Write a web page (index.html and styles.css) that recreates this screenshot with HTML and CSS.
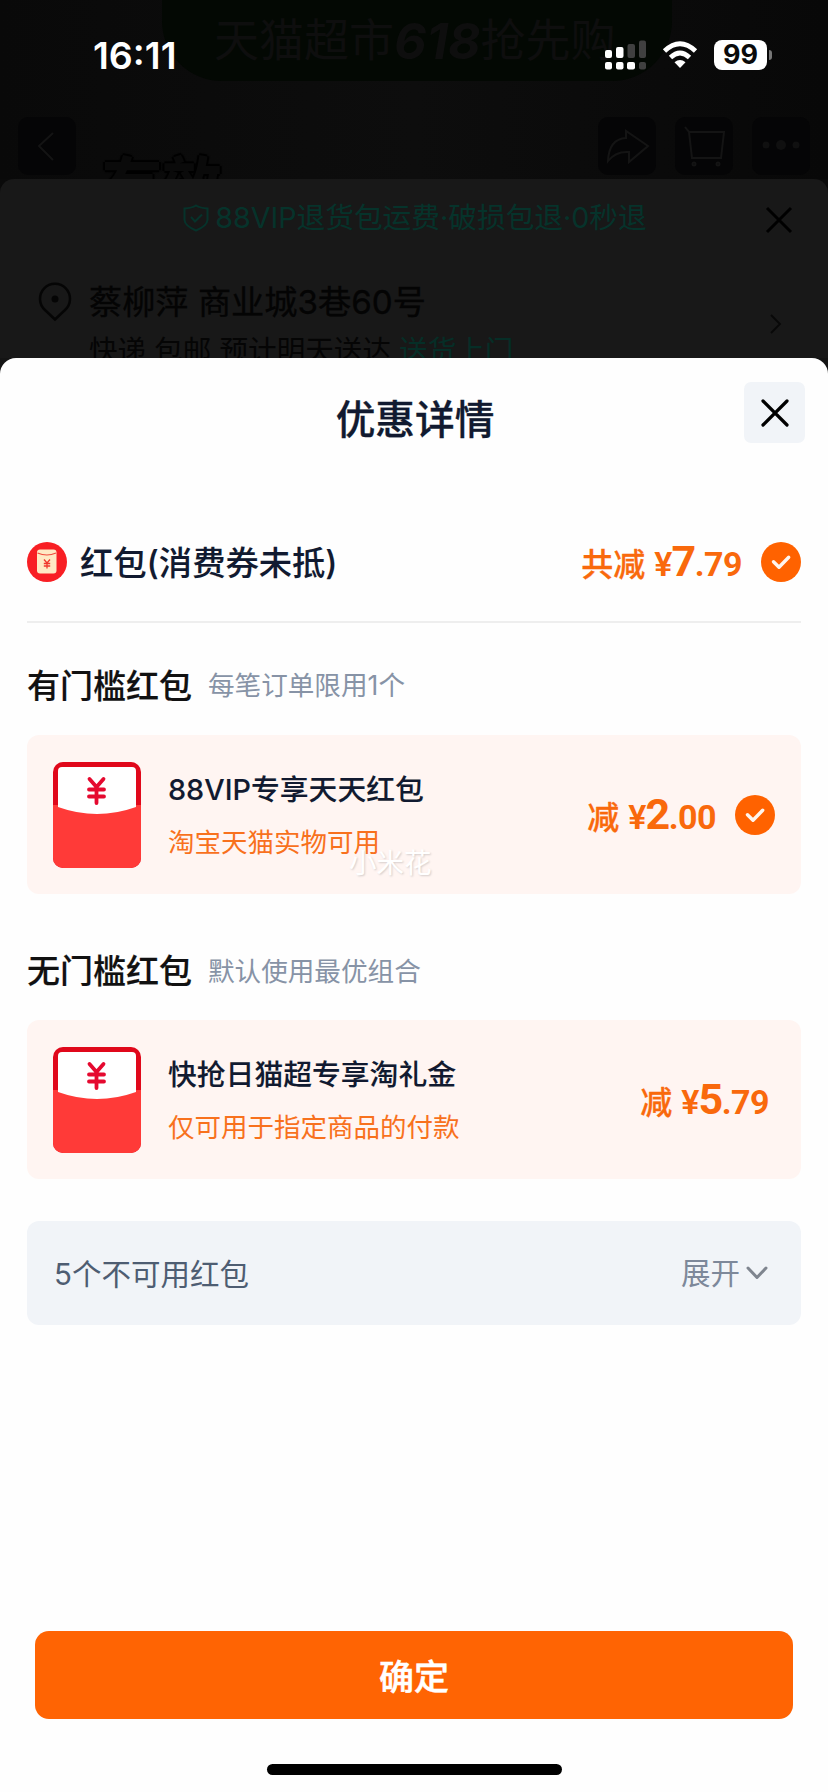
FILE: index.html
```html
<!DOCTYPE html>
<html lang="zh-CN">
<head>
<meta charset="utf-8">
<title>优惠详情</title>
<link rel="stylesheet" href="styles.css">
</head>
<body>
<svg width="0" height="0" class="defs" aria-hidden="true">
  <symbol id="check" viewBox="0 0 40 40">
    <circle cx="20" cy="20" r="20" fill="#ff6200"/>
    <path d="M12.5 19.8 L18 25.3 L27.7 15.3" fill="none" stroke="#fff5ee" stroke-width="3.4" stroke-linecap="round" stroke-linejoin="round"/>
  </symbol>
  <symbol id="envelope" viewBox="0 0 88 106">
    <rect width="88" height="106" rx="10" fill="#e0081b"/>
    <path d="M0 43 H88 V96 a10 10 0 0 1 -10 10 H10 a10 10 0 0 1 -10 -10 Z" fill="#ff3a38"/>
    <path d="M5 9 a4 4 0 0 1 4 -4 H79 a4 4 0 0 1 4 4 V45 Q44 59 5 45 Z" fill="#fff"/>
    <path d="M36.5 17 L43.5 25 L50.5 17 M36 27.5 H51 M36 34.5 H51 M43.5 26 V41" fill="none" stroke="#e5092f" stroke-width="3.8" stroke-linecap="round" stroke-linejoin="round"/>
  </symbol>
</svg>

<div class="phone">
  <section class="page">
    <div class="hero">
      <div class="banner"><span>天猫超市</span><b>618</b><span>抢先购</span></div>
      <nav class="nav">
        <span class="nav-btn"><svg width="58" height="58" viewBox="0 0 58 58"><path d="M35 16 L21 29 L35 43"/></svg></span>
        <span class="promo">有效</span>
        <span class="nav-btn"><svg width="58" height="58" viewBox="0 0 58 58"><path d="M10 44 Q11 22 28 21 V14 L50 29 L31 45 V35 Q18 34 10 44 Z"/></svg></span>
        <span class="nav-btn"><svg width="58" height="58" viewBox="0 0 58 58"><path d="M10 10 L14 15 L17 41 H46 L49 15 H14"/><circle cx="19" cy="47" r="1.5"/><circle cx="43" cy="47" r="1.5"/></svg></span>
        <span class="nav-btn"><svg width="58" height="58" viewBox="0 0 58 58" class="dots"><circle cx="14" cy="28" r="3.5"/><circle cx="29" cy="28" r="5"/><circle cx="44" cy="28" r="3.5"/></svg></span>
      </nav>
    </div>
    <div class="order">
      <div class="promise">
        <svg width="26" height="28" viewBox="0 0 26 28"><path d="M13 1.5 Q17 4 24.5 4.500 V16 Q24 22 13 26.500 Q2 22 1.500 16 V4.500 Q9 4 13 1.500 Z M8 13 L12 17.500 L19 10.500"/></svg>
        <span>88VIP退货包运费·破损包退·0秒退</span>
      </div>
      <svg class="order-close" width="28" height="28" viewBox="0 0 28 28"><path d="M2 2 L26 26 M26 2 L2 26"/></svg>
      <div class="address">
        <svg class="pin" width="34" height="40" viewBox="0 0 34 40"><path d="M17 37.500 L7 28 A15 15 0 1 1 27 28 Z"/><circle cx="17" cy="17" r="3.500"/></svg>
        <div class="address-text">
          <div class="addr-name">蔡柳萍 商业城3巷60号</div>
          <div class="addr-ship">快递 包邮 预计明天送达 <em>送货上门</em></div>
        </div>
        <svg class="arrow" width="14" height="22" viewBox="0 0 14 22"><path d="M2 2 L11 11 L2 20"/></svg>
      </div>
    </div>
    <header class="status">
      <span class="time">16:11</span>
      <svg class="signal" width="42" height="30" viewBox="0 0 42 30">
        <g fill="#fff"><rect x="0" y="10" width="7" height="8" rx="2"/><rect x="11" y="7" width="7.500" height="11" rx="2"/><rect x="0" y="22" width="7" height="7.500" rx="2"/><rect x="11" y="22" width="7.500" height="7.500" rx="2"/><rect x="22" y="22" width="8" height="7.500" rx="2"/></g>
        <g fill="#404040"><rect x="22.500" y="4" width="7.500" height="14" rx="2"/><rect x="34" y="0.500" width="7" height="17.500" rx="2"/><rect x="34" y="22" width="7" height="7.500" rx="2"/></g>
      </svg>
      <svg class="wifi" width="36" height="28" viewBox="0 0 36 28"><path d="M2.500 10 Q18 -4.500 33.500 10" /><path d="M8.500 16.500 Q18 7.500 27.500 16.500"/><path class="wedge" d="M18 27 L12.500 21.300 Q18 16.500 23.500 21.300 Z"/></svg>
      <span class="battery">99</span><i class="cap"></i>
    </header>
  </section>

  <main class="sheet">
    <div class="sheet-head">
      <h1>优惠详情</h1>
      <span class="close"><svg width="28" height="28" viewBox="0 0 28 28"><path d="M2 2 L26 26 M26 2 L2 26"/></svg></span>
    </div>

    <div class="summary">
      <svg class="coin" width="40" height="40" viewBox="0 0 40 40">
        <circle cx="20" cy="20" r="20" fill="#f81f24"/>
        <rect x="10" y="7.500" width="19.500" height="24" rx="3" fill="#ffe9c4"/>
        <path d="M10.500 11 Q20 15 29 11" fill="none" stroke="#f04a3c" stroke-width="1.200"/>
        <path d="M17 17.500 L20 21 L23 17.500 M16.800 21.500 H23.200 M16.800 24 H23.200 M20 21 V26.500" fill="none" stroke="#f0362c" stroke-width="1.300"/>
      </svg>
      <span class="summary-name">红包(消费券未抵)</span>
      <span class="price"><span class="cut">共减</span><span class="yen">¥</span><b>7</b><span class="cents">.79</span></span>
      <svg class="check" width="40" height="40"><use href="#check"/></svg>
    </div>

    <h2 class="group first"><span>有门槛红包</span><small>每笔订单限用1个</small></h2>
    <article class="card">
      <svg class="env" width="88" height="106"><use href="#envelope"/></svg>
      <div class="info"><h3>88VIP专享天天红包</h3><p>淘宝天猫实物可用</p></div>
      <span class="price"><span class="cut">减</span><span class="yen">¥</span><b>2</b><span class="cents">.00</span></span>
      <svg class="check" width="40" height="40"><use href="#check"/></svg>
      <span class="mark">小米花</span>
    </article>

    <h2 class="group"><span>无门槛红包</span><small>默认使用最优组合</small></h2>
    <article class="card alone">
      <svg class="env" width="88" height="106"><use href="#envelope"/></svg>
      <div class="info"><h3>快抢日猫超专享淘礼金</h3><p>仅可用于指定商品的付款</p></div>
      <span class="price"><span class="cut">减</span><span class="yen">¥</span><b>5</b><span class="cents">.79</span></span>
    </article>

    <div class="unusable">
      <span>5个不可用红包</span>
      <span class="expand"><span>展开</span><svg width="22" height="14" viewBox="0 0 22 14"><path d="M2 2 L11 11.500 L20 2"/></svg></span>
    </div>

    <button class="confirm">确定</button>
    <div class="home"></div>
  </main>
</div>
</body>
</html>
```
FILE: styles.css
```css
* { box-sizing: border-box; }
body {
  margin: 0;
  font-family: Inter, "Noto Sans CJK SC", sans-serif;
  background: #141414;
}
svg { display: block; flex: none; }
.defs { position: absolute; }
h1, h2, h3, p { margin: 0; font-weight: 500; }
.phone {
  display: flex;
  flex-direction: column;
  width: 828px;
  height: 1792px;
  overflow: hidden;
}

/* dimmed page behind the sheet */
.page { position: relative; height: 358px; overflow: hidden; flex: none; white-space: nowrap; background: #0a0a0a; }
.hero { height: 179px; overflow: hidden; background: linear-gradient(90deg, #090909, #0d0d0d 50%, #080808); }
.banner {
  display: flex;
  align-items: center;
  width: 510px;
  height: 81px;
  margin-left: 162px;
  padding-left: 52px;
  border-radius: 0 0 60px 60px;
  background: #030803;
  color: #0e0e0e;
  font-size: 45px;
  line-height: 76px;
}
.banner b { font-size: 50px; font-style: italic; font-weight: 700; }
.nav { display: flex; align-items: flex-start; gap: 19px; padding: 36px 18px 0; }
.nav-btn { width: 58px; height: 58px; border-radius: 10px; background: #050506; flex: none; }
.nav-btn svg { fill: none; stroke: #141414; stroke-width: 2; }
.nav-btn .dots { fill: #101010; stroke: none; }
.promo {
  flex: 1;
  height: 62px;
  padding: 30px 0 0 7px;
  font-size: 60px;
  line-height: 76px;
  font-weight: 800;
  color: #0a0a0a;
  text-shadow: 2px 0 1px #010101, -2px 0 1px #010101, 0 2px 1px #010101, 0 -2px 1px #010101;
}
.order { position: relative; height: 179px; background: #181818; border-radius: 14px 14px 0 0; }
.promise {
  display: flex;
  justify-content: center;
  gap: 6px;
  padding: 25px 0 0 4px;
  color: #06332b;
  font-size: 28.700px;
  line-height: 28px;
}
.promise svg { fill: none; stroke: #06332b; stroke-width: 2; margin-left: -2px; }
.order-close { position: absolute; right: 35px; top: 27px; stroke: #000; stroke-width: 3; }
.address { display: flex; padding: 49px 45px 0 38px; }
.pin { margin-top: 1px; fill: none; stroke: #050505; stroke-width: 2.500px; }
.pin circle { fill: #050505; stroke: none; }
.address-text { flex: 1; margin-left: 17px; }
.addr-name { font-size: 33.200px; line-height: 42px; color: #040404; -webkit-text-stroke: 0.300px #040404; }
.addr-ship { margin-top: 8px; font-size: 28.600px; line-height: 40px; color: #050505; }
.addr-ship em { font-style: normal; color: #062e27; }
.arrow { margin-top: 32px; fill: none; stroke: #080808; stroke-width: 1.800px; }

.status { position: absolute; inset: 0 0 auto 0; height: 110px; display: flex; align-items: center; color: #fff; }
.time { width: 511px; padding-left: 93px; font-size: 37.500px; font-weight: 600; }
.signal { margin-left: 94px; }
.wifi { margin-left: 15px; fill: none; stroke: #fff; stroke-width: 4.800px; }
.wifi .wedge { fill: #fff; stroke: none; }
.battery {
  width: 53px;
  height: 30px;
  margin-left: 16px;
  border-radius: 8px;
  background: #fff;
  color: #0a0a0a;
  font-size: 27px;
  font-weight: 700;
  line-height: 30px;
  text-align: center;
}
.cap { width: 3px; height: 10px; margin-left: 2px; border-radius: 0 4px 4px 0; background: #777; }

/* discount sheet */
.sheet {
  display: flex;
  flex-direction: column;
  height: 1434px;
  padding: 0 27px;
  border-radius: 16px 16px 0 0;
  background: #fefefe;
  white-space: nowrap;
}
.sheet-head { display: grid; grid-template-columns: 61px 1fr 61px; height: 146px; margin-right: -4px; }
.sheet-head h1 { grid-column: 2; margin-left: -2px; padding-top: 32px; font-size: 39.700px; line-height: 60px; text-align: center; color: #111a30; -webkit-text-stroke: 0.300px #111a30; }
.close { display: grid; place-items: center; width: 61px; height: 61px; margin-top: 24px; border-radius: 7px; background: #f1f4f8; }
.close svg { stroke: #000; stroke-width: 3.200px; stroke-linecap: round; }
.summary { display: flex; align-items: center; height: 119px; padding-bottom: 2px; border-bottom: 2px solid #eee; }
.summary-name { flex: 1; margin: -3px 0 0 13px; font-size: 33.300px; font-weight: 500; color: #111a30; -webkit-text-stroke: 0.100px #111a30; }
.price { display: flex; align-items: baseline; padding-top: 2px; color: #f9690c; font: 700 34px/44px Roboto, "Noto Sans CJK SC", sans-serif; }
.price .cut { margin: 0 9px 0 0; font-size: 32px; font-weight: 500; line-height: 40px; -webkit-text-stroke: 0.300px #f9690c; }
.price .yen { font-size: 34px; font-weight: 600; letter-spacing: -1px; }
.price b { font-size: 43px; font-weight: 700; letter-spacing: -1.500px; }
.price .cents { letter-spacing: -0.500px; }
.check { margin-left: 19px; }
.group { display: flex; align-items: center; height: 126px; padding-top: 24px; }
.group.first { height: 112px; padding-top: 9px; }
.group span { font-size: 33px; color: #111; -webkit-text-stroke: 0.200px #111; }
.group small { margin-left: 16px; font-size: 26.600px; font-weight: 400; color: #8793a6; }
.card {
  position: relative;
  display: flex;
  align-items: center;
  height: 159px;
  padding: 0 26px;
  border-radius: 12px;
  background: #fff5f2;
}
.info { flex: 1; margin-left: 27px; padding-top: 2px; }
.info h3 { font-size: 28.800px; line-height: 42px; color: #111a30; -webkit-text-stroke: 0.100px #111a30; }
.info p { margin-top: 10px; font-size: 26.500px; font-weight: 400; line-height: 42px; color: #f8711d; }
.alone { padding-right: 32px; }
.mark { position: absolute; left: 322px; top: 108px; font-size: 27.500px; line-height: 40px; color: #fff; text-shadow: 1px 1px 2px #d5cdcb; }
.unusable {
  display: flex;
  align-items: center;
  justify-content: space-between;
  height: 104px;
  margin-top: 42px;
  padding: 0 33px 0 27px;
  border-radius: 12px;
  background: #f1f4f8;
  font-size: 29.500px;
  color: #4e5d72;
}
.unusable span { margin-top: -2px; }
.expand { display: flex; align-items: center; gap: 6px; color: #7d889a; }
.expand svg { margin-top: 2px; fill: none; stroke: #7f858f; stroke-width: 3px; stroke-linecap: round; stroke-linejoin: round; }
.confirm {
  height: 88px;
  margin: 306px 8px 0;
  padding: 0;
  border: 0;
  border-radius: 14px;
  background: #ff6403;
  color: #fff;
  font: 500 35px/86px "Noto Sans CJK SC", sans-serif;
  -webkit-text-stroke: 0.500px #fff;
}
.home { width: 295px; height: 11px; margin: 45px auto 0; border-radius: 6px; background: #000; }
```
